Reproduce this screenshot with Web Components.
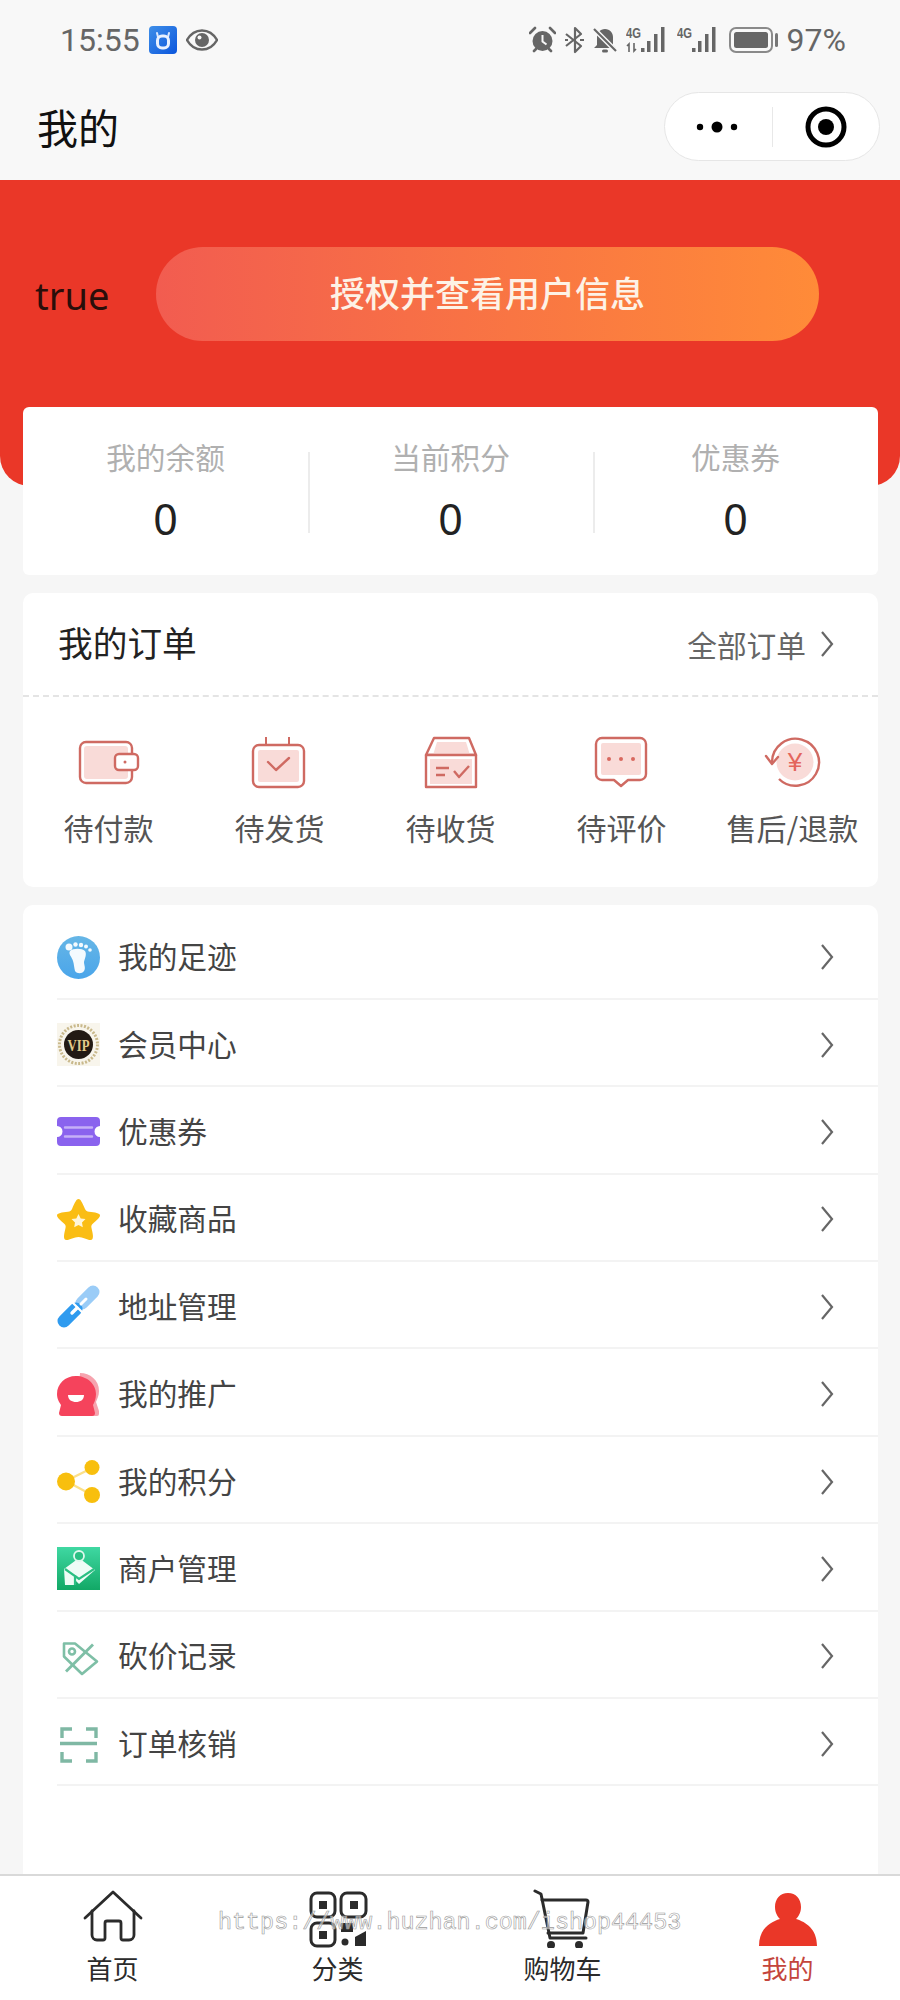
<!DOCTYPE html>
<html lang="zh">
<head>
<meta charset="utf-8">
<title>我的</title>
<style>
  html, body { margin: 0; padding: 0; }
  body {
    width: 900px;
    height: 2000px;
    overflow: hidden;
    background: #f6f6f6;
    font-family: "Noto Sans CJK SC", "Noto Sans", sans-serif;
  }
  #app { display: flex; flex-direction: column; height: 2000px; }
  #scroll { flex: 1; min-height: 0; display: flex; flex-direction: column; overflow: hidden; }
  svg { display: block; }
</style>
</head>
<body>
<div id="app">
  <status-bar></status-bar>
  <nav-bar>我的</nav-bar>
  <div id="scroll">
    <profile-header name="true" action="授权并查看用户信息"></profile-header>
    <stat-card>
      <stat-item label="我的余额" value="0"></stat-item>
      <stat-item label="当前积分" value="0"></stat-item>
      <stat-item label="优惠券" value="0"></stat-item>
    </stat-card>
    <order-card>
      <order-item label="待付款">
        <svg slot="icon" width="70" height="60" viewBox="0 0 70 60" fill="none" stroke="#cf6a62" stroke-width="2.4" stroke-linejoin="round">
          <rect x="6" y="7" width="52" height="41" rx="6" fill="#fff"/>
          <rect x="10" y="11" width="44" height="33" rx="3" fill="#f9dbd8" stroke="none"/>
          <rect x="41" y="19" width="23" height="16" rx="4" fill="#fff"/>
          <circle cx="51" cy="27" r="1.500" fill="#cf6a62" stroke="none"/>
        </svg>
      </order-item>
      <order-item label="待发货">
        <svg slot="icon" width="70" height="60" viewBox="0 0 70 60" fill="none" stroke="#cf6a62" stroke-width="2.4" stroke-linejoin="round">
          <path d="M21 2v9M44 2v9" stroke-width="2"/>
          <rect x="8" y="10" width="51" height="42" rx="6" fill="#fff"/>
          <rect x="13" y="15" width="41" height="32" rx="2" fill="#f9dbd8" stroke="none"/>
          <path d="M23 27l8 8 13-12" stroke-linecap="round"/>
        </svg>
      </order-item>
      <order-item label="待收货">
        <svg slot="icon" width="70" height="60" viewBox="0 0 70 60" fill="none" stroke="#cf6a62" stroke-width="2.4" stroke-linejoin="round">
          <path d="M18 3h35l7 17H10z" fill="#fff"/>
          <path d="M21 7h29l4 13H17z" fill="#f9dbd8" stroke="none"/>
          <rect x="10" y="20" width="50" height="32" fill="#fff"/>
          <rect x="14" y="24" width="42" height="25" fill="#f9dbd8" stroke="none"/>
          <path d="M20 33h13M20 40h9" stroke-width="2.600"/>
          <path d="M38 36l5 6 10-11" stroke-width="2.400"/>
        </svg>
      </order-item>
      <order-item label="待评价">
        <svg slot="icon" width="70" height="60" viewBox="0 0 70 60" fill="none" stroke="#cf6a62" stroke-width="2.4" stroke-linejoin="round">
          <path d="M15 3h38a6 6 0 0 1 6 6v30a6 6 0 0 1-6 6H41l-7 6-7-6H15a6 6 0 0 1-6-6V9a6 6 0 0 1 6-6z" fill="#fff"/>
          <rect x="14" y="8" width="40" height="32" rx="2" fill="#f9dbd8" stroke="none"/>
          <g fill="#d9685f" stroke="none"><circle cx="22" cy="24" r="2"/><circle cx="34" cy="24" r="2"/><circle cx="46" cy="24" r="2"/></g>
        </svg>
      </order-item>
      <order-item label="售后/退款">
        <svg slot="icon" width="70" height="60" viewBox="0 0 70 60" fill="none" stroke="#cf6a62" stroke-width="2.4">
          <circle cx="37" cy="27" r="18.500" fill="#f9dbd8" stroke="none"/>
          <path d="M14 27a23.500 23.500 0 1 1 7 17" />
          <path d="M8 21l6 8 6-7" stroke-linecap="round" stroke-linejoin="round"/>
          <text x="37" y="36" text-anchor="middle" font-size="26" fill="#e4655c" stroke="none" font-family="Liberation Sans, sans-serif">¥</text>
        </svg>
      </order-item>
    </order-card>
    <menu-list>
      <menu-row>
        <svg slot="icon" width="43" height="43" viewBox="0 0 43 43">
          <defs><linearGradient id="ft" x1="0" y1="0" x2="0" y2="1"><stop offset="0" stop-color="#66b6e6"/><stop offset="1" stop-color="#4aa5ea"/></linearGradient></defs>
          <circle cx="21.500" cy="21.500" r="21.500" fill="url(#ft)"/>
          <g fill="#f4fafe">
            <path d="M13 15c3-3 12-3 15 0 2 3 0 7-1 11 0 3 2 6 0 9-2 3-7 3-9 0-1-4-1-7-2-10-1-4-5-7-3-10z"/>
            <circle cx="12" cy="11" r="3.500"/><circle cx="18.500" cy="8.500" r="2.200"/><circle cx="24" cy="9" r="2.200"/><circle cx="29" cy="10.500" r="2"/><circle cx="33" cy="14" r="1.800"/>
          </g>
        </svg>
        我的足迹
      </menu-row>
      <menu-row>
        <svg slot="icon" width="43" height="43" viewBox="0 0 43 43">
          <rect width="43" height="43" fill="#f8f5ec"/>
          <circle cx="21.500" cy="21.500" r="19" fill="none" stroke="#c9b98c" stroke-width="3" stroke-dasharray="2 1.500"/>
          <circle cx="21.500" cy="21.500" r="14.500" fill="#221a14"/>
          <text x="21.500" y="27.500" text-anchor="middle" font-size="16" font-weight="700" fill="#e3c98a" font-family="Liberation Serif, serif" textLength="22" lengthAdjust="spacingAndGlyphs">VIP</text>
        </svg>
        会员中心
      </menu-row>
      <menu-row>
        <svg slot="icon" width="43" height="43" viewBox="0 0 43 43">
          <path d="M4 7h35a4 4 0 0 1 4 4v5a5.500 5.500 0 0 0 0 11v5a4 4 0 0 1-4 4H4a4 4 0 0 1-4-4v-5a5.500 5.500 0 0 0 0-11v-5a4 4 0 0 1 4-4z" fill="#8a63ee"/>
          <path d="M8 17.500h27M8 26.500h27" stroke="#c5b0f7" stroke-width="2.400" stroke-linecap="round"/>
        </svg>
        优惠券
      </menu-row>
      <menu-row>
        <svg slot="icon" width="43" height="43" viewBox="0 0 43 43">
          <path d="M21.500 1c2 0 3.500 3 6.500 10 1 2 2 2.500 4 2.800 6 .8 11 1.200 11 3.700 0 2-3 4.500-7.500 8.500-1 1-1.500 2-1 4 1 5 3 11-.5 12-3 .5-8-3-12.500-3s-9.500 3.500-12.500 3c-3.500-1-1.500-7-.5-12 .5-2 0-3-1-4C3 22 0 19.500 0 17.500c0-2.500 5-2.900 11-3.700 2-.3 3-.8 4-2.800 3-7 4.500-10 6.500-10z" fill="#fabd14"/>
          <path d="M21.500 16l2.200 4.400 4.800.7-3.500 3.400.8 4.800-4.300-2.300-4.300 2.300.8-4.800-3.500-3.400 4.800-.7z" fill="#fff6da"/>
        </svg>
        收藏商品
      </menu-row>
      <menu-row>
        <svg slot="icon" width="43" height="43" viewBox="0 0 43 43" fill="none" stroke-linecap="round">
          <path d="M25 18L36 7" stroke="#9accf7" stroke-width="13"/>
          <path d="M7 36l12-12" stroke="#2f9bef" stroke-width="13"/>
          <path d="M13 15l15 15" stroke="#fff" stroke-width="2.200"/>
          <path d="M15 28l5-5" stroke="#fff" stroke-width="3.400"/>
          <path d="M24 19l5-5" stroke="#fff" stroke-width="3"/>
        </svg>
        地址管理
      </menu-row>
      <menu-row>
        <svg slot="icon" width="43" height="43" viewBox="0 0 43 43">
          <path d="M23 0c10 0 19 7 19 18 0 5-2 8-3 11l3 9v3a2 2 0 0 1-2 2H20z" fill="#f6a3ae"/>
          <path d="M19 3C8 3 0 11 0 21c0 6 3 9 4 11l-2 8a3 3 0 0 0 3 3h30a3 3 0 0 0 3-3l-2-8c1-2 3-6 3-11C39 11 30 3 19 3z" fill="#f5435c"/>
          <path d="M11 22h16c0 5-4 7-8 7s-8-2-8-7z" fill="#fff"/>
        </svg>
        我的推广
      </menu-row>
      <menu-row>
        <svg slot="icon" width="43" height="43" viewBox="0 0 43 43">
          <path d="M9 21L35 8M9 21l26 14" stroke="#fbe08a" stroke-width="2.400"/>
          <g fill="#f8bf0e"><circle cx="9" cy="21.500" r="9"/><circle cx="35" cy="7.500" r="7.500"/><circle cx="35" cy="35" r="8"/></g>
        </svg>
        我的积分
      </menu-row>
      <menu-row>
        <svg slot="icon" width="43" height="43" viewBox="0 0 43 43">
          <defs><linearGradient id="mc" x1="0" y1="0" x2="0" y2="1"><stop offset="0" stop-color="#3fd8a2"/><stop offset="1" stop-color="#12a866"/></linearGradient></defs>
          <rect width="43" height="43" fill="url(#mc)"/>
          <path d="M7 22L22 11l16 12-16 14-4-4v5H8z" fill="#eefcf6"/>
          <path d="M8 22l10 7v9M18 29l4 3 15-10" fill="none" stroke="#2bbf83" stroke-width="2.200"/>
          <circle cx="22" cy="9" r="5" fill="#2bbf83" stroke="#dff8ed" stroke-width="1.800"/>
        </svg>
        商户管理
      </menu-row>
      <menu-row>
        <svg slot="icon" width="43" height="43" viewBox="0 0 43 43" fill="none" stroke="#7ebfa6" stroke-width="2.600" stroke-linejoin="round">
          <path d="M7 8.500H18L40 26.500 25 39 7 21.500z"/>
          <circle cx="15" cy="16.500" r="3"/>
          <path d="M9 36.500L36 9.500" stroke-width="2.800"/>
        </svg>
        砍价记录
      </menu-row>
      <menu-row>
        <svg slot="icon" width="43" height="43" viewBox="0 0 43 43" fill="none" stroke="#7fb8a4" stroke-width="3.400">
          <path d="M15 7H5v9M29 7h10v9M5 30v9h10M39 30v9H29"/>
          <path d="M3 21.500h37"/>
        </svg>
        订单核销
      </menu-row>
    </menu-list>
  </div>
  <tab-bar watermark="https://www.huzhan.com/ishop44453">
    <tab-item label="首页">
      <svg slot="icon" width="60" height="60" viewBox="0 0 60 60" fill="none" stroke="#2b2b2b" stroke-width="2.800" stroke-linejoin="round" stroke-linecap="round">
        <path d="M2 30L30 4l28 26"/>
        <path d="M9 24v24a5 5 0 0 0 5 5h6a2 2 0 0 0 2-2V36a2 2 0 0 1 2-2h12a2 2 0 0 1 2 2v15a2 2 0 0 0 2 2h6a5 5 0 0 0 5-5V24" transform="translate(0 -1)"/>
      </svg>
    </tab-item>
    <tab-item label="分类">
      <svg slot="icon" width="60" height="60" viewBox="0 0 60 60" fill="none" stroke="#2b2b2b" stroke-width="3">
        <rect x="3" y="5" width="24" height="24" rx="6"/>
        <rect x="33" y="5" width="25" height="24" rx="6"/>
        <rect x="3" y="35" width="24" height="23" rx="6"/>
        <g fill="#2b2b2b" stroke="none">
          <rect x="11" y="13" width="8" height="8"/>
          <rect x="42" y="13" width="8" height="8"/>
          <rect x="11" y="43" width="8" height="8"/>
          <rect x="33" y="35" width="12" height="9"/>
          <circle cx="37" cy="54" r="3.500"/>
          <path d="M58 43v15H47V49z"/>
        </g>
      </svg>
    </tab-item>
    <tab-item label="购物车">
      <svg slot="icon" width="60" height="60" viewBox="0 0 60 60" fill="none" stroke="#2b2b2b" stroke-width="3" stroke-linecap="round" stroke-linejoin="round">
        <path d="M2 3l6 3 9 44h36"/>
        <path d="M9 12h44a2 2 0 0 1 2 2l-5 31H15"/>
        <g fill="#2b2b2b" stroke="none"><circle cx="18" cy="57" r="4"/><circle cx="46" cy="57" r="4"/></g>
      </svg>
    </tab-item>
    <tab-item label="我的" active>
      <svg slot="icon" width="60" height="60" viewBox="0 0 60 60">
        <path d="M30 5c8 0 13 6 13 14 0 6-3 10-5 12 10 3 21 10 21 27H1c0-17 11-24 21-27-2-2-5-6-5-12 0-8 5-14 13-14z" fill="#ea3728"/>
      </svg>
    </tab-item>
  </tab-bar>
</div>

<script>
class StatusBar extends HTMLElement {
  constructor() {
    super();
    this.attachShadow({ mode: "open" });
    this.shadowRoot.innerHTML = `
      <style>
        :host { display: block; background: #f8f8f8; }
        .bar { height: 80px; display: flex; align-items: center; padding: 0 54px 0 60px; color: #666; font-family: Roboto, sans-serif; font-size: 32px; }
        .bar svg { display: block; flex: none; }
        .left, .right { display: flex; align-items: center; }
        .right { margin-left: auto; }
        .time { width: 81px; }
        text { font-family: "Liberation Sans", sans-serif; font-weight: 700; }
      </style>
      <div class="bar">
        <div class="left">
          <span class="time">15:55</span>
          <svg style="margin-left:8px" width="28" height="28" viewBox="0 0 28 28">
            <defs><linearGradient id="b" x1="0" y1="0" x2="1" y2="1"><stop offset="0" stop-color="#3f8fe8"/><stop offset="1" stop-color="#0b56dd"/></linearGradient></defs>
            <rect width="28" height="28" rx="4" fill="url(#b)"/>
            <path d="M8 7l1 4M20 7l-1 4" stroke="#dbe9ff" stroke-width="2" stroke-linecap="round"/>
            <rect x="8.500" y="10" width="11" height="12" rx="4.500" fill="none" stroke="#e8f1ff" stroke-width="3"/>
          </svg>
          <svg style="margin-left:9px" width="32" height="22" viewBox="0 0 32 22">
            <path d="M1 11C5 4 10 1.500 16 1.500S27 4 31 11c-4 7-9 9.500-15 9.500S5 18 1 11z" fill="none" stroke="#666" stroke-width="2.400"/>
            <circle cx="16" cy="11" r="7" fill="#666"/>
            <circle cx="13.500" cy="8.500" r="2" fill="#f8f8f8"/>
          </svg>
        </div>
        <div class="right">
          <svg width="27" height="28" viewBox="0 0 27 28">
            <circle cx="13.500" cy="15" r="10" fill="#666"/>
            <path d="M13.500 9v6.500l4 3" stroke="#f8f8f8" stroke-width="2" fill="none"/>
            <path d="M1 7l5-5M26 7l-5-5M5 25l2-2M22 25l-2-2" stroke="#666" stroke-width="2.600" stroke-linecap="round"/>
          </svg>
          <svg style="margin-left:8px" width="21" height="28" viewBox="0 0 21 28">
            <path d="M2 8l15 12-6 6V2l6 6L2 20" fill="none" stroke="#666" stroke-width="2.200" stroke-linejoin="round"/>
            <path d="M16 14h4M1 14h3" stroke="#666" stroke-width="2.200"/>
          </svg>
          <svg style="margin-left:8px" width="24" height="28" viewBox="0 0 24 28">
            <path d="M12 3c5 0 8 4 8 8v8l3 3H1l3-3v-8c0-4 3-8 8-8z" fill="#666"/>
            <rect x="9" y="23.500" width="6" height="3" rx="1.500" fill="#666"/>
            <path d="M1 3l22 22" stroke="#f8f8f8" stroke-width="5"/>
            <path d="M1 3l22 22" stroke="#666" stroke-width="2.200"/>
          </svg>
          <svg style="margin-left:9px" width="42" height="28" viewBox="0 0 42 28" fill="#666">
            <text x="0" y="12" font-size="14.500" textLength="15" lengthAdjust="spacingAndGlyphs">4G</text>
            <path d="M3 26v-8l-2 2M8 17v8l2-2" fill="none" stroke="#666" stroke-width="1.600"/>
            <rect x="15" y="22" width="3.500" height="4"/><rect x="21" y="15" width="3.500" height="11"/><rect x="28" y="8" width="3.500" height="18"/><rect x="35" y="1" width="3.500" height="25"/>
          </svg>
          <svg style="margin-left:9px" width="42" height="28" viewBox="0 0 42 28" fill="#666">
            <text x="0" y="12" font-size="14.500" textLength="15" lengthAdjust="spacingAndGlyphs">4G</text>
            <rect x="15" y="22" width="3.500" height="4"/><rect x="21" y="15" width="3.500" height="11"/><rect x="28" y="8" width="3.500" height="18"/><rect x="35" y="1" width="3.500" height="25"/>
          </svg>
          <svg style="margin-left:10px" width="50" height="28" viewBox="0 0 50 28">
            <rect x="1" y="2" width="42" height="24" rx="6" fill="none" stroke="#8a8a8a" stroke-width="2"/>
            <rect x="5" y="6" width="34" height="16" rx="2.500" fill="#666"/>
            <rect x="46" y="7" width="3" height="14" rx="1.500" fill="#777"/>
          </svg>
          <span style="margin-left:8px">97%</span>
        </div>
      </div>`;
  }
}
customElements.define("status-bar", StatusBar);

class NavBar extends HTMLElement {
  constructor() {
    super();
    this.attachShadow({ mode: "open" });
    this.shadowRoot.innerHTML = `
      <style>
        :host { display: block; background: #f8f8f8; }
        .nav { height: 100px; box-sizing: border-box; padding: 12px 20px 19px 37px; display: flex; align-items: center; justify-content: space-between; }
        .title { font-size: 41px; color: #111; line-height: 1; }
        .capsule { width: 216px; height: 69px; box-sizing: border-box; border: 1px solid #e6e6e6; border-radius: 35px; background: #fff; display: flex; align-items: center; }
        .capsule > div { flex: 1; display: flex; justify-content: center; align-items: center; height: 40px; }
        .capsule > div:first-child { border-right: 1px solid #e8e8e8; }
        svg { display: block; }
      </style>
      <div class="nav">
        <div class="title"><slot></slot></div>
        <div class="capsule">
          <div>
            <svg width="44" height="14" viewBox="0 0 44 14"><g fill="#000"><circle cx="4" cy="7" r="3.200"/><circle cx="21" cy="7" r="5.500"/><circle cx="38" cy="7" r="3.200"/></g></svg>
          </div>
          <div>
            <svg width="42" height="42" viewBox="0 0 42 42"><circle cx="21" cy="21" r="18" fill="none" stroke="#000" stroke-width="5"/><circle cx="21" cy="21" r="8" fill="#000"/></svg>
          </div>
        </div>
      </div>`;
  }
}
customElements.define("nav-bar", NavBar);

class ProfileHeader extends HTMLElement {
  constructor() {
    super();
    this.attachShadow({ mode: "open" });
    this.shadowRoot.innerHTML = `
      <style>
        :host { display: block; flex: none; }
        .wrap { height: 306px; box-sizing: border-box; background: #ea3728; border-radius: 0 0 30px 30px; padding: 67px 81px 0 35px; display: flex; align-items: flex-start; }
        .name { width: 121px; height: 94px; padding-top: 2px; box-sizing: border-box; display: flex; align-items: center; font-family: "Noto Sans", sans-serif; font-size: 38px; color: #2a0e0a; }
        .btn { flex: 1; height: 94px; border-radius: 47px; background: linear-gradient(90deg, #f25c50, #ff8b38); color: #fdf2e6; font-size: 35px; font-weight: 500; display: flex; align-items: center; justify-content: center; padding-bottom: 6px; box-sizing: border-box; }
      </style>
      <div class="wrap">
        <div class="name"></div>
        <div class="btn"></div>
      </div>`;
    this.shadowRoot.querySelector(".name").textContent = this.getAttribute("name");
    this.shadowRoot.querySelector(".btn").textContent = this.getAttribute("action");
  }
}
customElements.define("profile-header", ProfileHeader);

class StatCard extends HTMLElement {
  constructor() {
    super();
    this.attachShadow({ mode: "open" });
    this.shadowRoot.innerHTML = `
      <style>
        :host { display: flex; flex: none; position: relative; margin: -79px 22px 0 23px; height: 168px; background: #fff; border-radius: 6px; padding-top: 45px; box-sizing: border-box; }
        ::slotted(stat-item:not(:last-child)) { border-right: 2px solid #ececec; margin-right: -2px; }
      </style>
      <slot></slot>`;
  }
}
customElements.define("stat-card", StatCard);

class StatItem extends HTMLElement {
  constructor() {
    super();
    this.attachShadow({ mode: "open" });
    this.shadowRoot.innerHTML = `
      <style>
        :host { display: block; flex: 1; height: 81px; text-align: center; }
        .label { font-size: 29.700px; line-height: 40px; margin-top: -15px; color: #b0b0b0; }
        .value { font-family: "Noto Sans", sans-serif; font-size: 43px; line-height: 50px; margin-top: 17px; color: #222; }
      </style>
      <div class="label"></div>
      <div class="value"></div>`;
    this.shadowRoot.querySelector(".label").textContent = this.getAttribute("label");
    this.shadowRoot.querySelector(".value").textContent = this.getAttribute("value");
  }
}
customElements.define("stat-item", StatItem);

class OrderCard extends HTMLElement {
  constructor() {
    super();
    this.attachShadow({ mode: "open" });
    this.shadowRoot.innerHTML = `
      <style>
        :host { display: block; flex: none; margin: 18px 22px 0 23px; height: 294px; background: #fff; border-radius: 10px; }
        .head { height: 104px; box-sizing: border-box; border-bottom: 2px dashed #e4e4e4; padding: 0 44px 0 35px; display: flex; align-items: center; justify-content: space-between; }
        .title { font-size: 34.700px; color: #222; margin-top: -4px; }
        .all { display: flex; align-items: center; gap: 14px; font-size: 29.700px; color: #666; }
        .grid { display: grid; grid-template-columns: repeat(5, 1fr); padding-top: 38px; }
        svg { display: block; }
      </style>
      <div class="head">
        <div class="title">我的订单</div>
        <div class="all">全部订单
          <svg width="14" height="28" viewBox="0 0 14 28"><path d="M2 2l10 12L2 26" fill="none" stroke="#666" stroke-width="2.200"/></svg>
        </div>
      </div>
      <div class="grid"><slot></slot></div>`;
  }
}
customElements.define("order-card", OrderCard);

class OrderItem extends HTMLElement {
  constructor() {
    super();
    this.attachShadow({ mode: "open" });
    this.shadowRoot.innerHTML = `
      <style>
        :host { display: flex; flex-direction: column; align-items: center; }
        .label { margin-top: 12px; font-size: 30px; line-height: 40px; color: #555; white-space: nowrap; }
      </style>
      <slot name="icon"></slot>
      <div class="label"></div>`;
    this.shadowRoot.querySelector(".label").textContent = this.getAttribute("label");
  }
}
customElements.define("order-item", OrderItem);

class MenuList extends HTMLElement {
  constructor() {
    super();
    this.attachShadow({ mode: "open" });
    this.shadowRoot.innerHTML = `
      <style>
        :host { display: block; flex: 1; margin: 18px 22px 0 23px; padding: 7.500px 0 0 34px; background: #fff; border-radius: 10px 10px 0 0; }
      </style>
      <slot></slot>`;
  }
}
customElements.define("menu-list", MenuList);

class MenuRow extends HTMLElement {
  constructor() {
    super();
    this.attachShadow({ mode: "open" });
    this.shadowRoot.innerHTML = `
      <style>
        :host { display: flex; align-items: center; height: 87.400px; box-sizing: border-box; padding: 4px 44px 0 0; border-bottom: 2px solid #f3f3f3; }
        .icon { width: 43px; height: 43px; margin-right: 18px; flex: none; }
        .label { flex: 1; font-size: 29.700px; color: #444; padding-bottom: 3px; }
        svg { display: block; }
      </style>
      <div class="icon"><slot name="icon"></slot></div>
      <div class="label"><slot></slot></div>
      <svg width="14" height="28" viewBox="0 0 14 28"><path d="M2 2l10 12L2 26" fill="none" stroke="#666" stroke-width="2.200"/></svg>`;
  }
}
customElements.define("menu-row", MenuRow);

class TabBar extends HTMLElement {
  constructor() {
    super();
    this.attachShadow({ mode: "open" });
    this.shadowRoot.innerHTML = `
      <style>
        :host { display: block; flex: none; position: relative; height: 126px; box-sizing: border-box; border-top: 2px solid #d9d9d9; background: #fff; }
        .tabs { display: grid; grid-template-columns: repeat(4, 1fr); padding-top: 12px; }
        .mark { position: absolute; left: 218px; top: 33px; font-family: "Liberation Mono", monospace; font-size: 23.400px; line-height: 28px; color: rgba(255,255,255,.55); -webkit-text-stroke: .6px #9a9a9a; white-space: nowrap; }
      </style>
      <div class="tabs"><slot></slot></div>
      <div class="mark"></div>`;
    this.shadowRoot.querySelector(".mark").textContent = this.getAttribute("watermark");
  }
}
customElements.define("tab-bar", TabBar);

class TabItem extends HTMLElement {
  constructor() {
    super();
    this.attachShadow({ mode: "open" });
    this.shadowRoot.innerHTML = `
      <style>
        :host { display: flex; flex-direction: column; align-items: center; }
        .label { margin-top: 5px; font-size: 26px; line-height: 30px; color: #2b2b2b; }
        :host([active]) .label { color: #c4453c; }
      </style>
      <slot name="icon"></slot>
      <div class="label"></div>`;
    this.shadowRoot.querySelector(".label").textContent = this.getAttribute("label");
  }
}
customElements.define("tab-item", TabItem);
</script>
</body>
</html>
